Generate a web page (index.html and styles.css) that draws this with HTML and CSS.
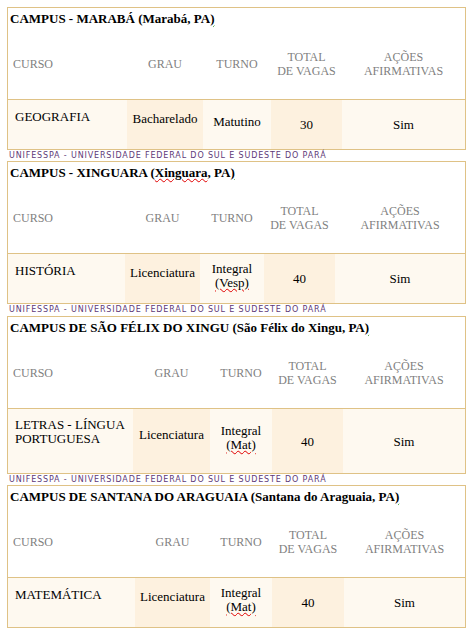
FILE: index.html
```html
<!DOCTYPE html>
<html>
<head>
    <title>Unifesspa - Cursos por campus</title>
    <link rel="stylesheet" href="styles.css">
</head>
<body>
    <section class="campus">
        <h2 class="campus-title">CAMPUS - MARABÁ (Marabá, PA<span class="gram">)</span></h2>
        <div class="grid cols-maraba">
            <div class="th th-curso"><span>CURSO</span></div>
            <div class="th"><span>GRAU</span></div>
            <div class="th"><span>TURNO</span></div>
            <div class="th"><span>TOTAL<br>DE VAGAS</span></div>
            <div class="th"><span>AÇÕES<br>AFIRMATIVAS</span></div>
            <div class="td td-curso"><span>GEOGRAFIA</span></div>
            <div class="td td-grau shade"><span>Bacharelado</span></div>
            <div class="td td-turno"><span>Matutino</span></div>
            <div class="td shade"><span>30</span></div>
            <div class="td"><span>Sim</span></div>
        </div>
    </section>
    <p class="footer">UNIFESSPA - UNIVERSIDADE FEDERAL DO SUL E SUDESTE DO PARÁ</p>

    <section class="campus">
        <h2 class="campus-title">CAMPUS - XINGUARA (<span class="spell">Xinguara</span>, PA<span class="gram">)</span></h2>
        <div class="grid cols-xinguara">
            <div class="th th-curso"><span>CURSO</span></div>
            <div class="th"><span>GRAU</span></div>
            <div class="th"><span>TURNO</span></div>
            <div class="th"><span>TOTAL<br>DE VAGAS</span></div>
            <div class="th"><span>AÇÕES<br>AFIRMATIVAS</span></div>
            <div class="td td-curso"><span>HISTÓRIA</span></div>
            <div class="td td-grau shade"><span>Licenciatura</span></div>
            <div class="td td-turno"><span>Integral<br><span class="spell">(Vesp)</span></span></div>
            <div class="td shade"><span>40</span></div>
            <div class="td"><span>Sim</span></div>
        </div>
    </section>
    <p class="footer footer-wide">UNIFESSPA - UNIVERSIDADE FEDERAL DO SUL E SUDESTE DO PARÁ</p>

    <section class="campus">
        <h2 class="campus-title">CAMPUS DE SÃO FÉLIX DO XINGU (São Félix do Xingu, PA<span class="gram">)</span></h2>
        <div class="grid cols-saofelix">
            <div class="th th-curso"><span>CURSO</span></div>
            <div class="th"><span>GRAU</span></div>
            <div class="th"><span>TURNO</span></div>
            <div class="th"><span>TOTAL<br>DE VAGAS</span></div>
            <div class="th"><span>AÇÕES<br>AFIRMATIVAS</span></div>
            <div class="td td-curso tall"><span>LETRAS - LÍNGUA<br>PORTUGUESA</span></div>
            <div class="td td-grau shade"><span>Licenciatura</span></div>
            <div class="td td-turno"><span>Integral<br><span class="spell">(Mat)</span></span></div>
            <div class="td shade"><span>40</span></div>
            <div class="td"><span>Sim</span></div>
        </div>
    </section>
    <p class="footer">UNIFESSPA - UNIVERSIDADE FEDERAL DO SUL E SUDESTE DO PARÁ</p>

    <section class="campus">
        <h2 class="campus-title">CAMPUS DE SANTANA DO ARAGUAIA (Santana do Araguaia, PA<span class="gram">)</span></h2>
        <div class="grid cols-santana">
            <div class="th th-curso"><span>CURSO</span></div>
            <div class="th"><span>GRAU</span></div>
            <div class="th"><span>TURNO</span></div>
            <div class="th"><span>TOTAL<br>DE VAGAS</span></div>
            <div class="th"><span>AÇÕES<br>AFIRMATIVAS</span></div>
            <div class="td td-curso"><span>MATEMÁTICA</span></div>
            <div class="td td-grau shade"><span>Licenciatura</span></div>
            <div class="td td-turno"><span>Integral<br><span class="spell">(Mat)</span></span></div>
            <div class="td shade"><span>40</span></div>
            <div class="td"><span>Sim</span></div>
        </div>
    </section>
</body>
</html>
```
FILE: styles.css
```css
body {
    margin: 7px 3px 0 7px;
    font-family: "Liberation Serif", "Times New Roman", serif;
    background-color: #fff;
    color: #000;
}

.campus {
    width: 459px;
    box-sizing: border-box;
    border: 1px solid #dfc286;
}

.campus-title {
    margin: 0;
    height: 28px;
    padding: 3px 0 0 2px;
    box-sizing: border-box;
    font-size: 13px;
    line-height: 15px;
    font-weight: bold;
}

.grid {
    display: grid;
    grid-template-rows: 63px auto;
}

.cols-maraba { grid-template-columns: 119px 76px 68px 71px 1fr; }
.cols-xinguara { grid-template-columns: 117px 75px 64px 71px 1fr; }
.cols-saofelix { grid-template-columns: 125px 77px 62px 71px 1fr; }
.cols-santana { grid-template-columns: 127px 75px 62px 72px 1fr; }

.th {
    display: flex;
    align-items: center;
    justify-content: center;
    text-align: center;
    padding-bottom: 8px;
    font-size: 12px;
    line-height: 14px;
    color: #7f7f7f;
}

.th-curso {
    justify-content: flex-start;
    padding-left: 5px;
}

.td {
    display: flex;
    align-items: center;
    justify-content: center;
    text-align: center;
    min-height: 50px;
    box-sizing: border-box;
    border-top: 1px solid #dfc286;
    background-color: #fef9f0;
    font-size: 13px;
    line-height: 15px;
}

.td.shade {
    background-color: #fdf1df;
}

.td-curso {
    align-items: flex-start;
    justify-content: flex-start;
    text-align: left;
    padding: 10px 0 0 7px;
    line-height: 14px;
}

.td-curso.tall {
    min-height: 65px;
    padding-top: 9px;
}

.td-grau {
    padding-bottom: 13px;
}

.td-turno {
    padding-bottom: 6px;
    line-height: 14px;
}

.spell {
    text-decoration: underline wavy #e00000;
    text-decoration-thickness: 1px;
    text-underline-offset: 1px;
}

.gram {
    text-decoration: underline wavy #2f9a2f;
    text-decoration-thickness: 1px;
}

.footer {
    margin: 0;
    padding-left: 2px;
    height: 11px;
    font-family: "DejaVu Sans", Verdana, sans-serif;
    font-size: 8px;
    line-height: 11px;
    letter-spacing: 0.85px;
    color: #5e3a78;
}

.footer-wide {
    height: 12px;
}
```
